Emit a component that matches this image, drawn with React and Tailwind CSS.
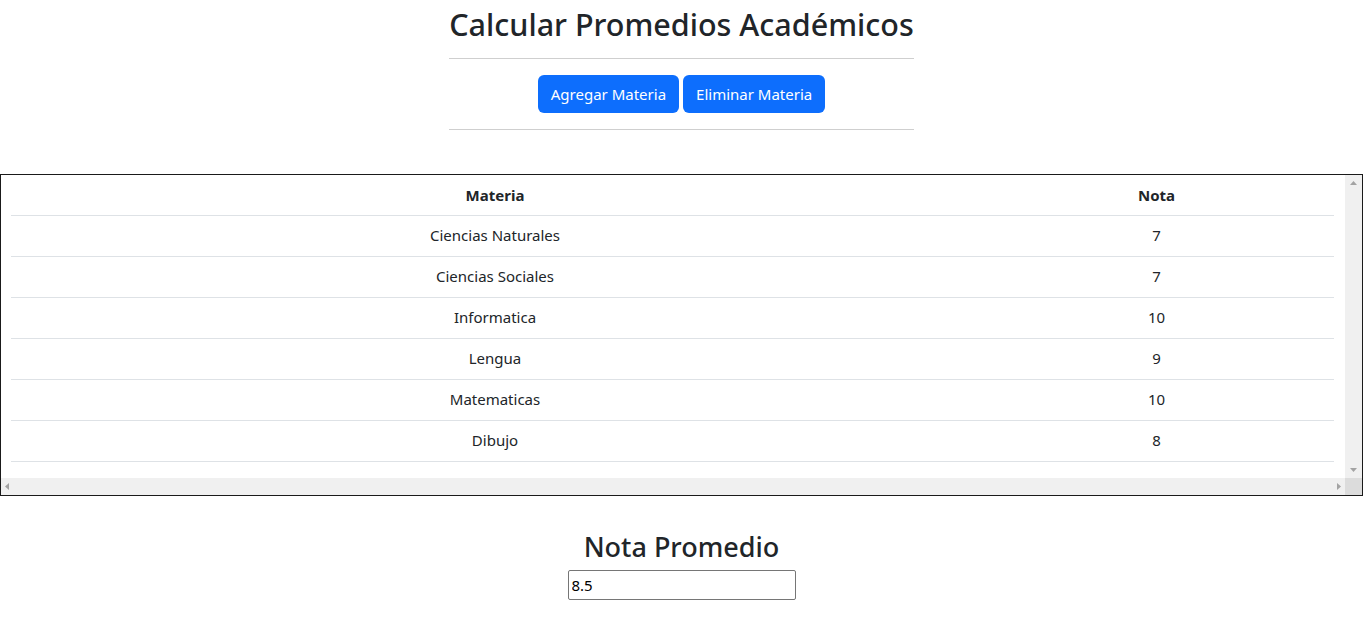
import React from "react";

const materias = [
	{ nombre: "Ciencias Naturales", nota: 7 },
	{ nombre: "Ciencias Sociales", nota: 7 },
	{ nombre: "Informatica", nota: 10 },
	{ nombre: "Lengua", nota: 9 },
	{ nombre: "Matematicas", nota: 10 },
	{ nombre: "Dibujo", nota: 8 },
];

const Arrow = ({ dir }) => {
	const points = {
		up: "0,4 7,4 3.5,0",
		down: "0,0 7,0 3.5,4",
		left: "4,0 4,7 0,3.5",
		right: "0,0 0,7 4,3.5",
	}[dir];
	const vertical = dir === "up" || dir === "down";
	return (
		<svg
			width={vertical ? 7 : 4}
			height={vertical ? 4 : 7}
			viewBox={vertical ? "0 0 7 4" : "0 0 4 7"}
		>
			<polygon points={points} fill="#a3a3a3" />
		</svg>
	);
};

const App = () => {
	const promedio = (
		materias.reduce((acc, m) => acc + m.nota, 0) / materias.length
	).toFixed(1);

	return (
		<div
			className="min-h-screen bg-white text-[#212529]"
			style={{ fontFamily: '"Noto Sans", "Open Sans", sans-serif' }}
		>
			<div className="flex justify-center">
				<div className="flex flex-col items-stretch">
					<h1 className="text-[30.5px] leading-[48px] font-medium text-center">
						Calcular Promedios Académicos
					</h1>
					<hr className="mt-[10px] border-t border-[#cfcfcf]" />
					<div className="flex justify-center gap-[4px] mt-[16px]">
						<button className="h-[38px] px-[13px] bg-[#0d6efd] text-white text-[15px] rounded-[6px]">
							Agregar Materia
						</button>
						<button className="h-[38px] px-[13px] bg-[#0d6efd] text-white text-[15px] rounded-[6px]">
							Eliminar Materia
						</button>
					</div>
					<hr className="mt-[16px] border-t border-[#cfcfcf]" />
				</div>
			</div>

			<div className="mt-[44px] border border-[#1a1a1a] flex flex-col">
				<div className="flex h-[303px]">
					<div className="flex-1 overflow-hidden">
						<table className="ml-[10px] w-[1323px] text-[15px] border-collapse">
							<thead>
								<tr className="border-b border-[#dee2e6]">
									<th className="w-[968px] h-[40px] font-bold text-center">Materia</th>
									<th className="h-[40px] font-bold text-center">Nota</th>
								</tr>
							</thead>
							<tbody>
								{materias.map((m) => (
									<tr key={m.nombre} className="border-b border-[#dee2e6]">
										<td className="h-[41px] text-center">{m.nombre}</td>
										<td className="h-[41px] text-center">{m.nota}</td>
									</tr>
								))}
							</tbody>
						</table>
					</div>
					<div className="w-[17px] bg-[#f0f0f0] flex flex-col items-center justify-between py-[6px]">
						<Arrow dir="up" />
						<Arrow dir="down" />
					</div>
				</div>
				<div className="flex h-[17px]">
					<div className="flex-1 bg-[#f0f0f0] flex items-center justify-between px-[4px]">
						<Arrow dir="left" />
						<Arrow dir="right" />
					</div>
					<div className="w-[17px] bg-[#dcdcdc]" />
				</div>
			</div>

			<div className="flex flex-col items-center mt-[32px]">
				<h2 className="text-[27px] leading-[38px] font-medium">Nota Promedio</h2>
				<input
					readOnly
					value={promedio}
					className="mt-[4px] w-[228px] h-[30px] border border-[#767676] rounded-[2px] px-[3px] text-[15px] text-black"
				/>
			</div>
		</div>
	);
};

export default App;
